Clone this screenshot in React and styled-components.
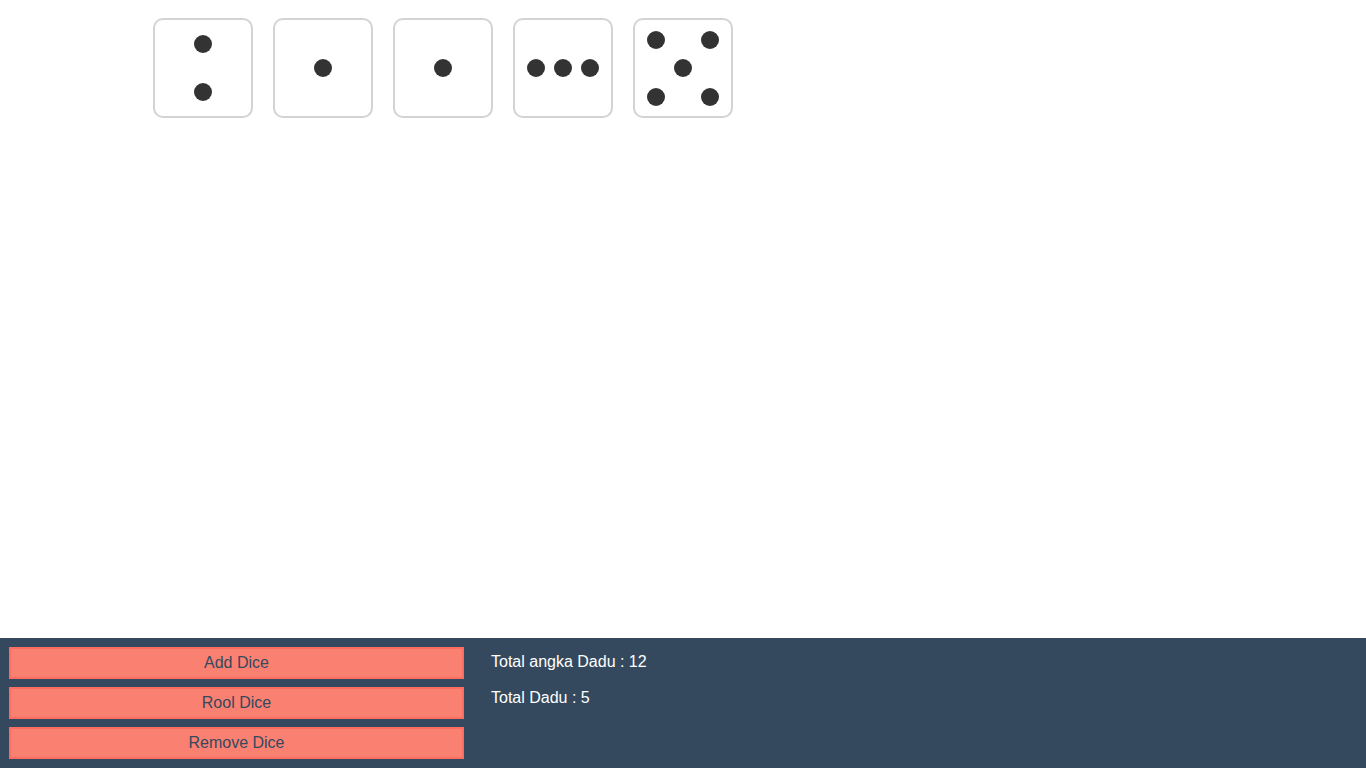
import styled, { createGlobalStyle } from "styled-components"

const GlobalStyle = createGlobalStyle`
  html, body {
    margin: 0;
    padding: 0;
    background: #ffffff;
    font-family: "Liberation Sans", Arial, sans-serif;
  }
`

const Page = styled.div`
  min-height: 100vh;
  display: flex;
  flex-direction: column;
`

const Board = styled.div`
  flex: 1;
  display: flex;
  gap: 20px;
  padding: 18px 0 0 153px;
  align-items: flex-start;
`

const Die = styled.div`
  width: 96px;
  height: 96px;
  border: 2px solid #d3d3d3;
  border-radius: 10px;
  display: grid;
  grid-template-columns: repeat(3, 18px);
  grid-template-rows: repeat(3, 18px);
  column-gap: 9px;
  row-gap: ${(p) => p.$rowGap}px;
  justify-content: center;
  align-content: center;
`

const Dot = styled.span`
  width: 18px;
  height: 18px;
  border-radius: 50%;
  background: #333333;
  grid-column: ${(p) => p.$col};
  grid-row: ${(p) => p.$row};
`

const Footer = styled.div`
  height: 130px;
  background: #34495e;
  display: flex;
  padding: 9px;
  box-sizing: border-box;
  gap: 27px;
`

const Buttons = styled.div`
  width: 455px;
  display: flex;
  flex-direction: column;
  gap: 8px;
`

const Button = styled.button`
  height: 32px;
  background-color: #fa8072;
  border: 2px solid #fd6d5f;
  color: #34495e;
  font-family: "Liberation Sans", Arial, sans-serif;
  font-size: 16px;
  cursor: pointer;
  padding: 0;
`

const Info = styled.div`
  display: flex;
  flex-direction: column;
  gap: 17px;
  padding-top: 5px;
`

const Line = styled.div`
  color: #ffffff;
  font-size: 16px;
  line-height: 19px;
`

const faces = {
  1: { gap: 9, dots: [[2, 2]] },
  2: { gap: 6, dots: [[2, 1], [2, 3]] },
  3: { gap: 9, dots: [[1, 2], [2, 2], [3, 2]] },
  5: { gap: 10.5, dots: [[1, 1], [3, 1], [2, 2], [1, 3], [3, 3]] },
}

const dice = [2, 1, 1, 3, 5]

const App = () => {
  return (
    <Page>
      <GlobalStyle />
      <Board>
        {dice.map((n, i) => (
          <Die key={i} $rowGap={faces[n].gap}>
            {faces[n].dots.map(([c, r], j) => (
              <Dot key={j} $col={c} $row={r} />
            ))}
          </Die>
        ))}
      </Board>
      <Footer>
        <Buttons>
          <Button>Add Dice</Button>
          <Button>Rool Dice</Button>
          <Button>Remove Dice</Button>
        </Buttons>
        <Info>
          <Line>Total angka Dadu : 12</Line>
          <Line>Total Dadu : 5</Line>
        </Info>
      </Footer>
    </Page>
  )
}

export default App
